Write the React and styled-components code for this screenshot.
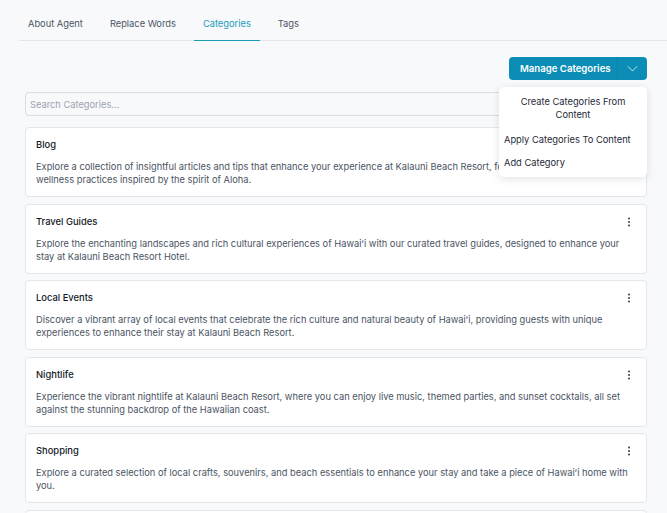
import React, { useState } from "react";
import styled, { createGlobalStyle } from "styled-components";

const GlobalStyle = createGlobalStyle`
    html, body {
        margin: 0;
        padding: 0;
        background: #f8f9fb;
        font-family: Inter, "Noto Sans", sans-serif;
        color: #1f2937;
    }
`;

const Pagina = styled.div`
    padding: 7px 0 0 19px;
    min-height: 513px;
    box-sizing: border-box;
`;

const BarraPestanas = styled.nav`
    display: flex;
    gap: 9px;
    border-bottom: 1px solid #e3e6ea;
`;

const Pestana = styled.button`
    border: none;
    background: none;
    padding: 10px 9px 9px;
    margin-bottom: -1px;
    font-family: inherit;
    font-size: 9.3px;
    line-height: 14px;
    color: ${props => props.activa ? "#1c9bb6" : "#4b5563"};
    border-bottom: 1.5px solid ${props => props.activa ? "#1c9bb6" : "transparent"};
    cursor: pointer;
`;

const Contenido = styled.section`
    margin: 16px 20px 0 6px;
    display: flex;
    flex-direction: column;
`;

const FilaAcciones = styled.div`
    display: flex;
    justify-content: flex-end;
    position: relative;
`;

const BotonMenu = styled.div`
    display: flex;
    height: 23px;
    width: 138px;
    border-radius: 4px;
    background: #0b8db5;
    color: #fff;
    overflow: hidden;
`;

const BotonTexto = styled.button`
    flex: 1;
    border: none;
    background: none;
    color: inherit;
    font-family: inherit;
    font-size: 9.6px;
    font-weight: 600;
    padding: 0 0 0 11px;
    text-align: left;
    border-right: 1px solid rgba(0, 0, 0, 0.03);
`;

const BotonFlecha = styled.button`
    width: 30px;
    border: none;
    background: none;
    color: inherit;
    display: flex;
    align-items: center;
    justify-content: center;
    padding: 0;
`;

const Desplegable = styled.ul`
    position: absolute;
    top: 30px;
    right: 0;
    width: 148px;
    margin: 0;
    padding: 4px 0;
    list-style: none;
    background: #fff;
    border-radius: 5px;
    box-shadow: 0 2px 8px rgba(15, 23, 42, 0.12);
    z-index: 2;
`;

const OpcionMenu = styled.li`
    padding: 4px 5px;
    font-size: 9.3px;
    line-height: 13px;
    color: #1f2937;
    text-align: ${props => props.centrado ? "center" : "left"};
    padding-top: ${props => props.centrado ? "4px" : "5px"};
    padding-bottom: ${props => props.centrado ? "6px" : "4px"};
    & + & {
        margin-top: 1px;
    }
`;

const Buscador = styled.input`
    margin-top: 12px;
    height: 24px;
    box-sizing: border-box;
    border: 1px solid #d9dde3;
    border-radius: 4px;
    background: #f8f9fb;
    padding: 0 4px;
    font-family: inherit;
    font-size: 9.3px;
    color: #374151;
    &::placeholder {
        color: #9ca3af;
    }
`;

const ListaCategorias = styled.div`
    margin-top: 11px;
    display: flex;
    flex-direction: column;
    gap: 6.5px;
`;

const Tarjeta = styled.article`
    background: #fff;
    border: 1px solid #e3e6ea;
    border-radius: 4px;
    padding: 10px 10px 10px;
    height: 70px;
    box-sizing: border-box;
    flex-shrink: 0;
`;

const CabeceraTarjeta = styled.div`
    display: flex;
    justify-content: space-between;
    align-items: center;
`;

const TituloTarjeta = styled.h3`
    margin: 0;
    font-size: 9.4px;
    font-weight: 500;
    line-height: 14px;
    color: #111827;
`;

const BotonOpciones = styled.button`
    border: none;
    background: none;
    padding: 0;
    color: #1f2937;
    display: flex;
    margin-right: 3px;
`;

const DescripcionTarjeta = styled.p`
    margin: 8px 0 0;
    font-size: 9.3px;
    line-height: 13px;
    color: #4b5563;
`;

const IconoFlecha = () => (
    <svg width="13" height="13" viewBox="0 0 24 24" fill="none" stroke="currentColor" strokeWidth="1.4" strokeLinecap="round" strokeLinejoin="round">
        <path d="M4 8.5l8 8 8-8" />
    </svg>
);

const IconoPuntos = () => (
    <svg width="8" height="12" viewBox="0 0 8 12" fill="currentColor">
        <circle cx="4" cy="2.5" r="0.9" />
        <circle cx="4" cy="6" r="0.9" />
        <circle cx="4" cy="9.5" r="0.9" />
    </svg>
);

const categorias = [
    {
        id: 1,
        nombre: "Blog",
        descripcion: "Explore a collection of insightful articles and tips that enhance your experience at Kalauni Beach Resort, featuring local culture and wellness practices inspired by the spirit of Aloha."
    },
    {
        id: 2,
        nombre: "Travel Guides",
        descripcion: "Explore the enchanting landscapes and rich cultural experiences of Hawaiʻi with our curated travel guides, designed to enhance your stay at Kalauni Beach Resort Hotel."
    },
    {
        id: 3,
        nombre: "Local Events",
        descripcion: "Discover a vibrant array of local events that celebrate the rich culture and natural beauty of Hawaiʻi, providing guests with unique experiences to enhance their stay at Kalauni Beach Resort."
    },
    {
        id: 4,
        nombre: "Nightlife",
        descripcion: "Experience the vibrant nightlife at Kalauni Beach Resort, where you can enjoy live music, themed parties, and sunset cocktails, all set against the stunning backdrop of the Hawaiian coast."
    },
    {
        id: 5,
        nombre: "Shopping",
        descripcion: "Explore a curated selection of local crafts, souvenirs, and beach essentials to enhance your stay and take a piece of Hawaiʻi home with you."
    },
    {
        id: 6,
        nombre: "Dining",
        descripcion: "Savor the flavors of the islands with our guide to local restaurants and dining experiences."
    }
];

const pestanas = ["About Agent", "Replace Words", "Categories", "Tags"];

const App = () => {
    const [activa, setActiva] = useState("Categories");
    const [busqueda, setBusqueda] = useState("");

    return (
        <>
            <GlobalStyle />
            <Pagina>
                <BarraPestanas>
                    {pestanas.map(p => (
                        <Pestana key={p} activa={p === activa ? 1 : 0} onClick={() => setActiva(p)}>
                            {p}
                        </Pestana>
                    ))}
                </BarraPestanas>

                <Contenido>
                    <FilaAcciones>
                        <BotonMenu>
                            <BotonTexto>Manage Categories</BotonTexto>
                            <BotonFlecha><IconoFlecha /></BotonFlecha>
                        </BotonMenu>
                        <Desplegable>
                            <OpcionMenu centrado>Create Categories From<br />Content</OpcionMenu>
                            <OpcionMenu>Apply Categories To Content</OpcionMenu>
                            <OpcionMenu>Add Category</OpcionMenu>
                        </Desplegable>
                    </FilaAcciones>

                    <Buscador
                        placeholder="Search Categories..."
                        value={busqueda}
                        onChange={e => setBusqueda(e.target.value)}
                    />

                    <ListaCategorias>
                        {categorias.map(cat => (
                            <Tarjeta key={cat.id}>
                                <CabeceraTarjeta>
                                    <TituloTarjeta>{cat.nombre}</TituloTarjeta>
                                    <BotonOpciones><IconoPuntos /></BotonOpciones>
                                </CabeceraTarjeta>
                                <DescripcionTarjeta>{cat.descripcion}</DescripcionTarjeta>
                            </Tarjeta>
                        ))}
                    </ListaCategorias>
                </Contenido>
            </Pagina>
        </>
    );
}

export default App;
